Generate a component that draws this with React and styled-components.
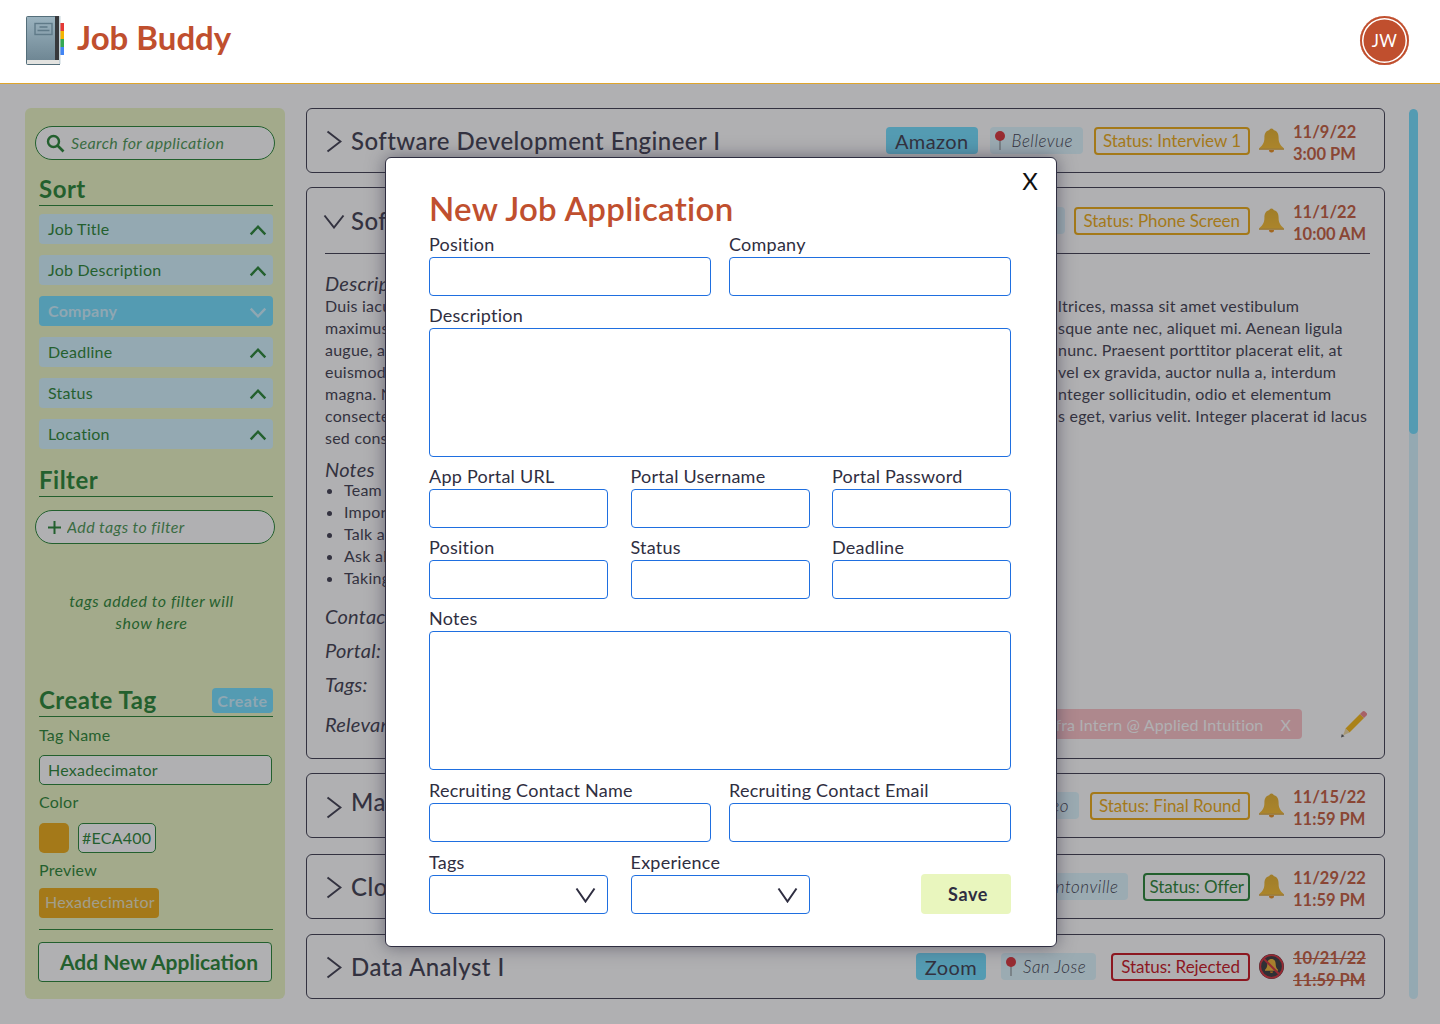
import React from "react";
import styled, { createGlobalStyle } from "styled-components";

const FONT = `"Lato", "Noto Sans", sans-serif`;
const INK = "#2f2e41";
const GREEN = "#157a24";
const RUST = "#c04f2e";
const AMBER = "#eca400";
const SKY = "#66dcff";
const PALE_SKY = "#d0f3ff";
const SKY_TEXT = "#c8f0ff";
const CREAM = "#e9f6be";

const statusColors = { amber: AMBER, green: "#157a24", red: "#c4000c" };

const sortOptions = [
  { label: "Job Title" },
  { label: "Job Description" },
  { label: "Company", active: true },
  { label: "Deadline" },
  { label: "Status" },
  { label: "Location" },
];

const descriptionLines = [
  ["Duis iaculis", "ltrices, massa sit amet vestibulum"],
  ["maximus ligula", "sque ante nec, aliquet mi. Aenean ligula"],
  ["augue, a tempor", "nunc. Praesent porttitor placerat elit, at"],
  ["euismod lorem", "vel ex gravida, auctor nulla a, interdum"],
  ["magna. Nulla", "nteger sollicitudin, odio et elementum"],
  ["consectetur", "s eget, varius velit. Integer placerat id lacus"],
  ["sed consequat", ""],
];

const noteItems = ["Team", "Important", "Talk about", "Ask about", "Taking"];

const GlobalStyles = createGlobalStyle`
  html, body {
    margin: 0;
    padding: 0;
    background: #fff;
    overflow: hidden;
  }
  * {
    box-sizing: border-box;
  }
  body {
    font-family: ${FONT};
    color: ${INK};
    letter-spacing: 0.015em;
  }
  input, button, textarea {
    letter-spacing: inherit;
  }
`;

const Page = styled.div`
  position: relative;
  width: 1440px;
  height: 1024px;
  overflow: hidden;
`;

const Header = styled.header`
  height: 84px;
  padding: 16px 31px 0 26px;
  display: flex;
  align-items: flex-start;
  background: #fff;
  border-bottom: 1px solid #dfa52c;
`;

const Brand = styled.h1`
  margin: 0 0 0 13px;
  font-size: 33px;
  line-height: 43px;
  font-weight: 700;
  letter-spacing: 0;
  color: ${RUST};
`;

const Avatar = styled.div`
  margin-left: auto;
  width: 49px;
  height: 49px;
  border-radius: 50%;
  display: flex;
  align-items: center;
  justify-content: center;
  background: ${RUST};
  box-shadow: inset 0 0 0 2px ${RUST}, inset 0 0 0 3.5px #fff;
  color: #fff;
  font-size: 17px;
`;

const Main = styled.main`
  height: 940px;
  padding: 24px 19px 25px 25px;
  display: grid;
  grid-template-columns: 260px 1079px 12px;
  column-gap: 21px;
`;

const Sidebar = styled.aside`
  padding: 18px 10px 0;
  border-radius: 6px;
  background: ${CREAM};
  color: ${GREEN};
`;

const PillField = styled.label`
  height: 34px;
  padding: 0 12px 0 ${(p) => p.$left || 10}px;
  display: flex;
  align-items: center;
  gap: ${(p) => p.$gap || 6}px;
  border: 1px solid ${GREEN};
  border-radius: 17px;
  background: #fff;
  margin-top: ${(p) => p.$top || 0}px;
`;

const PillInput = styled.input`
  flex: 1;
  min-width: 0;
  border: 0;
  padding: 0 0 2px;
  outline: 0;
  background: transparent;
  font: italic 16px ${FONT};
  letter-spacing: 0.4px;
  color: ${GREEN};
  &::placeholder {
    color: ${GREEN};
    opacity: 0.85;
  }
`;

const SideBlock = styled.div`
  margin: ${(p) => p.$top || 0}px 2px 0 4px;
`;

const SideHeading = styled.div`
  height: 32px;
  padding-bottom: 2px;
  display: flex;
  align-items: center;
  justify-content: space-between;
  border-bottom: 1px solid ${GREEN};
  font-size: 24px;
  line-height: 30px;
  font-weight: 700;
  letter-spacing: 0.5px;
`;

const SortList = styled.div`
  margin-top: 8px;
  display: flex;
  flex-direction: column;
  gap: 11px;
`;

const SortRow = styled.div`
  height: 30px;
  padding: 0 6px 2px 9px;
  display: flex;
  align-items: center;
  justify-content: space-between;
  border-radius: 4px;
  font-size: 16px;
  font-weight: ${(p) => (p.$active ? 700 : 400)};
  background: ${(p) => (p.$active ? SKY : PALE_SKY)};
  color: ${(p) => (p.$active ? SKY_TEXT : GREEN)};
  svg {
    margin-top: 4px;
  }
`;

const Hint = styled.p`
  margin: 46px 9px 0 0;
  text-align: center;
  font-size: 16px;
  line-height: 22px;
  font-style: italic;
  letter-spacing: 0.55px;
`;

const CreateButton = styled.button`
  width: 61px;
  height: 25px;
  margin-top: 2px;
  padding: 0;
  border: 0;
  border-radius: 4px;
  background: ${SKY};
  color: ${SKY_TEXT};
  font: 700 16px ${FONT};
`;

const SmallLabel = styled.div`
  margin-top: ${(p) => p.$top}px;
  font-size: 16px;
  line-height: 22px;
`;

const TagNameInput = styled.input`
  display: block;
  width: 233px;
  height: 30px;
  margin-top: 9px;
  padding: 0 8px 2px;
  border: 1px solid ${GREEN};
  border-radius: 5px;
  background: #fff;
  font: 16px ${FONT};
  color: ${GREEN};
`;

const ColorRow = styled.div`
  margin-top: 10px;
  display: flex;
  gap: 9px;
`;

const Swatch = styled.div`
  width: 30px;
  height: 30px;
  border-radius: 5px;
  background: ${AMBER};
`;

const HexInput = styled.input`
  width: 78px;
  height: 30px;
  padding: 0 3px 2px;
  border: 1px solid ${GREEN};
  border-radius: 5px;
  background: #fff;
  font: 16px ${FONT};
  color: ${GREEN};
`;

const PreviewTag = styled.div`
  margin-top: 7px;
  width: 120px;
  height: 30px;
  padding-left: 6px;
  border-radius: 4px;
  background: ${AMBER};
  color: #e7e2c0;
  font-size: 16px;
  line-height: 28px;
`;

const Rule = styled.hr`
  margin: 11px 0 0;
  border: 0;
  border-top: 1px solid ${GREEN};
`;

const AddButton = styled.button`
  display: block;
  width: 234px;
  height: 40px;
  margin: 12px 0 0 -1px;
  padding: 0 0 2px 8px;
  border: 1px solid ${GREEN};
  border-radius: 4px;
  background: #fff;
  color: ${GREEN};
  font: 700 21px ${FONT};
  letter-spacing: 0;
`;

const JobList = styled.section`
  display: flex;
  flex-direction: column;
  gap: 14px;
`;

const Card = styled.article`
  margin-bottom: ${(p) => p.$after || 0}px;
  padding: 0 14px 0 18px;
  border: 1px solid ${INK};
  border-radius: 6px;
  background: #fff;
`;

const CardBody = styled.div`
  padding-bottom: 19px;
`;

const CardRow = styled.div`
  height: ${(p) => (p.$open ? 66 : 63)}px;
  display: flex;
  align-items: center;
  ${(p) => p.$open && `border-bottom: 1px solid ${INK};`}
`;

const ChevronSlot = styled.span`
  width: 26px;
  flex: none;
  display: flex;
  margin-top: ${(p) => (p.$lift ? 4 : 1)}px;
  padding-left: ${(p) => (p.$open ? 0 : 1)}px;
  margin-left: ${(p) => (p.$open ? -2 : 0)}px;
  margin-right: ${(p) => (p.$open ? 2 : 0)}px;
`;

const JobTitle = styled.h2`
  margin: 0 auto ${(p) => p.$lift || 0}px 0;
  font-size: 24px;
  font-weight: 500;
  letter-spacing: 0.45px;
  white-space: nowrap;
`;

const CompanyTag = styled.span`
  height: 27px;
  margin-right: ${(p) => p.$gap || 12}px;
  padding: 0 9px;
  display: flex;
  align-items: center;
  border-radius: 4px;
  background: ${SKY};
  font-size: 20px;
  letter-spacing: 0.4px;
`;

const LocationTag = styled.span`
  height: 27px;
  margin-right: ${(p) => p.$gap || 11}px;
  padding: 0 10px 0 2px;
  display: flex;
  align-items: center;
  gap: 4px;
  border-radius: 4px;
  background: #dcf7ff;
  font-size: 17px;
  font-style: italic;
  font-weight: 300;
  letter-spacing: 0.5px;
  white-space: nowrap;
`;

const StatusTag = styled.span`
  height: 28px;
  padding: 0 ${(p) => p.$pad}px;
  display: flex;
  align-items: center;
  border: 2px solid ${(p) => statusColors[p.$tone]};
  border-radius: 4px;
  color: ${(p) => statusColors[p.$tone]};
  font-size: 17px;
  letter-spacing: -0.05px;
  white-space: nowrap;
`;

const Deadline = styled.div`
  width: 77px;
  margin: 4px 0 0 9px;
  color: ${RUST};
  font-size: 16.5px;
  font-weight: 700;
  letter-spacing: 0;
  line-height: 22px;
  text-decoration: ${(p) => (p.$past ? "line-through" : "none")};
  white-space: nowrap;
`;

const BellSlot = styled.span`
  width: 25px;
  height: 25px;
  margin-left: 9px;
  flex: none;
  display: block;
`;

const CardSection = styled.div`
  margin-top: ${(p) => p.$top}px;
  font-size: 20px;
  line-height: 24px;
  font-style: italic;
  white-space: nowrap;
`;

const ParaLine = styled.div`
  display: grid;
  grid-template-columns: 733px 1fr;
  font-size: 16px;
  line-height: 22px;
  white-space: nowrap;
`;

const NoteList = styled.ul`
  margin: -2px 0 0;
  padding: 0 0 0 19px;
  font-size: 16px;
  line-height: 22px;
`;

const RelevantRow = styled.div`
  margin-top: 13px;
  height: 30px;
  display: flex;
  align-items: center;
  font-size: 20px;
  font-style: italic;
`;

const ContactTag = styled.span`
  margin-left: auto;
  width: 560px;
  height: 30px;
  padding: 0 11px 0 0;
  display: flex;
  align-items: center;
  justify-content: flex-end;
  gap: 17px;
  border-radius: 4px;
  background: #fcbcc2;
  color: #fff;
  font-size: 16px;
  font-style: normal;
  letter-spacing: 0.15px;
`;

const PencilSlot = styled.span`
  margin: 0 3px 0 37px;
  display: block;
  width: 28px;
  height: 28px;
`;

const ScrollTrack = styled.div`
  height: 890px;
  margin: 1px 0 0 3px;
  border-radius: 6px;
  background: ${PALE_SKY};
  overflow: hidden;
`;

const ScrollThumb = styled.div`
  height: 325px;
  border-radius: 6px;
  background: ${SKY};
`;

const Overlay = styled.div`
  position: absolute;
  top: 84px;
  left: 0;
  right: 0;
  bottom: 0;
  padding: 73px 0 0 2px;
  display: flex;
  justify-content: center;
  align-items: flex-start;
  background: rgba(58, 58, 62, 0.4);
`;

const Modal = styled.form`
  position: relative;
  width: 672px;
  height: 790px;
  padding: 30px 45px 0 43px;
  border: 1px solid ${INK};
  border-radius: 6px;
  background: #fff;
  box-shadow: 0 0 18px rgba(47, 46, 65, 0.55);
`;

const CloseButton = styled.button`
  position: absolute;
  top: 8px;
  right: 18px;
  padding: 0;
  border: 0;
  background: transparent;
  color: #111;
  font: 24px ${FONT};
`;

const ModalTitle = styled.h2`
  margin: 0;
  height: 45px;
  color: ${RUST};
  font-size: 33px;
  line-height: 40px;
  font-weight: 600;
  letter-spacing: 0.3px;
`;

const FormRows = styled.div`
  display: flex;
  flex-direction: column;
  gap: 8px;
`;

const FormRow = styled.div`
  display: grid;
  grid-template-columns: ${(p) =>
    p.$cols === 3 ? "179px 179px 179px" : p.$cols === 2 ? "282px 282px" : "1fr"};
  justify-content: space-between;
  margin-top: ${(p) => p.$top || 0}px;
`;

const FieldLabel = styled.label`
  display: block;
  font-size: 18px;
  line-height: 22px;
`;

const FieldInput = styled.input`
  display: block;
  width: 100%;
  height: 39px;
  margin-top: 2px;
  border: 1px solid #1f6fe0;
  border-radius: 4px;
  background: #fff;
`;

const FieldArea = styled.textarea`
  display: block;
  width: 100%;
  height: ${(p) => p.$h}px;
  margin-top: 2px;
  border: 1px solid #1f6fe0;
  border-radius: 4px;
  background: #fff;
  resize: none;
`;

const SelectBox = styled.div`
  height: 39px;
  margin-top: 2px;
  padding-right: 11px;
  display: flex;
  align-items: center;
  justify-content: flex-end;
  border: 1px solid #1f6fe0;
  border-radius: 4px;
`;

const SaveButton = styled.button`
  align-self: end;
  justify-self: end;
  width: 90px;
  height: 40px;
  padding-left: 10px;
  border: 0;
  border-radius: 4px;
  background: ${CREAM};
  color: ${INK};
  font: 700 18px ${FONT};
  letter-spacing: 0.6px;
`;

const Caret = ({ w, h, dir, color = INK, stroke = 2 }) => {
  const pad = stroke / 2 + 0.5;
  const points = {
    right: `${pad},${pad} ${w - pad},${h / 2} ${pad},${h - pad}`,
    down: `${pad},${pad} ${w / 2},${h - pad} ${w - pad},${pad}`,
    up: `${pad},${h - pad} ${w / 2},${pad} ${w - pad},${h - pad}`,
  }[dir];
  return (
    <svg width={w} height={h} viewBox={`0 0 ${w} ${h}`} style={{ flex: "none", display: "block" }}>
      <polyline points={points} fill="none" stroke={color} strokeWidth={stroke} />
    </svg>
  );
};

const BookLogo = () => (
  <svg width="38" height="50" viewBox="0 0 38 50">
    <defs>
      <linearGradient id="cover" x1="0" y1="0" x2="0" y2="1">
        <stop offset="0" stopColor="#9bb3bf" />
        <stop offset="1" stopColor="#6f8794" />
      </linearGradient>
    </defs>
    <rect x="34" y="7" width="4" height="8" fill="#e53935" />
    <rect x="34" y="15" width="4" height="8" fill="#f4b400" />
    <rect x="34" y="23" width="4" height="8" fill="#34a853" />
    <rect x="34" y="31" width="4" height="8" fill="#4285f4" />
    <path d="M2 0h32v49H2a2 2 0 0 1-2-2V2a2 2 0 0 1 2-2z" fill="#546e7a" />
    <rect x="1" y="1" width="32" height="43" fill="url(#cover)" />
    <rect x="29" y="0" width="4" height="44" fill="#37393c" />
    <rect x="33" y="0" width="1.5" height="48" fill="#c5d3da" />
    <rect x="1" y="44" width="32" height="4" fill="#e3e3e0" />
    <rect x="9" y="7.5" width="17" height="11" fill="none" stroke="#5f7a88" strokeWidth="1.4" />
    <path d="M13.5 11h8M11.5 14.5h12" stroke="#5f7a88" strokeWidth="1.3" />
  </svg>
);

const BellIcon = () => (
  <svg width="25" height="25" viewBox="0 0 25 25">
    <defs>
      <linearGradient id="bell" x1="0" y1="0" x2="0" y2="1">
        <stop offset="0" stopColor="#e3aa1c" />
        <stop offset="1" stopColor="#f8b81f" />
      </linearGradient>
    </defs>
    <path d="M12.5 0.5c1.3 0 2 .8 2.1 1.6 3.7 .9 5 3.9 5 7.7 0 4.700 1.4 7.300 5.200 10.500v1H.2v-1c3.800-3.200 5.200-5.800 5.200-10.500 0-3.800 1.300-6.800 5-7.700 .1-.8 .8-1.600 2.100-1.600z" fill="url(#bell)" />
    <rect x="0" y="20.400" width="25" height="1.400" fill="#d9a53a" />
    <path d="M10 22h5a2.500 2.500 0 0 1-5 0z" fill="#e8860c" />
  </svg>
);

const MutedBellIcon = () => (
  <svg width="25" height="25" viewBox="0 0 25 25">
    <circle cx="12.5" cy="12.5" r="12.500" fill="#2b2b30" />
    <circle cx="12.5" cy="12.5" r="11.300" fill="none" stroke="#d2202c" strokeWidth="1.800" />
    <path d="M12.500 5c3 0 4.200 2.400 4.200 5.200 0 2.700 .8 4 2.300 5.500v1.100H6v-1.100c1.500-1.500 2.300-2.800 2.300-5.500C8.300 7.400 9.500 5 12.500 5z" fill="#f0ad22" />
    <path d="M11 17.500h3a1.500 1.500 0 0 1-3 0z" fill="#e8860c" />
    <path d="M5 5l15 15" stroke="#d2202c" strokeWidth="2" />
  </svg>
);

const PinIcon = () => (
  <svg width="16" height="22" viewBox="0 0 16 22" style={{ flex: "none" }}>
    <rect x="7.200" y="8" width="1.600" height="12" fill="#9aa4a8" />
    <circle cx="8" cy="6" r="5" fill="#d8232a" />
  </svg>
);

const PencilIcon = () => (
  <svg width="28" height="28" viewBox="0 0 28 28">
    <path d="M6.500 18.500 21 4l4 4L10.500 22.500z" fill="#f5b301" />
    <path d="M21 4l2.500-2.500a1.800 1.800 0 0 1 2.500 0l1.500 1.500a1.800 1.800 0 0 1 0 2.500L25 8z" fill="#f07c80" />
    <path d="M6.500 18.500l4 4-6.500 3z" fill="#f1d79c" />
    <path d="M2 27.500l.8-3.500 2.700 2.200z" fill="#4a4a4a" />
  </svg>
);

const SearchIcon = () => (
  <svg width="19" height="19" viewBox="0 0 19 19" style={{ flex: "none" }}>
    <circle cx="7.500" cy="7.500" r="5.500" fill="none" stroke={GREEN} strokeWidth="2.400" />
    <path d="M11.500 11.500 17.500 17.500" stroke={GREEN} strokeWidth="2.600" />
  </svg>
);

const PlusIcon = () => (
  <svg width="13" height="13" viewBox="0 0 13 13" style={{ flex: "none" }}>
    <path d="M6.500 0v13M0 6.500h13" stroke={GREEN} strokeWidth="2" />
  </svg>
);

const JobCard = ({ title, company, companyGap, location, locationGap, status, tone, pad, date, time, muted, lift, after, children }) => (
  <Card $after={after}>
    <CardRow $open={!!children}>
      <ChevronSlot $open={!!children} $lift={lift}>
        {children ? <Caret dir="down" w={22} h={15} /> : <Caret dir="right" w={16} h={23} />}
      </ChevronSlot>
      <JobTitle $lift={lift}>{title}</JobTitle>
      <CompanyTag $gap={companyGap}>{company}</CompanyTag>
      <LocationTag $gap={locationGap}>
        <PinIcon />
        {location}
      </LocationTag>
      <StatusTag $tone={tone} $pad={pad}>Status: {status}</StatusTag>
      <BellSlot>{muted ? <MutedBellIcon /> : <BellIcon />}</BellSlot>
      <Deadline $past={muted}>
        {date}
        <br />
        {time}
      </Deadline>
    </CardRow>
    {children && <CardBody>{children}</CardBody>}
  </Card>
);

const Field = ({ label }) => (
  <div>
    <FieldLabel>{label}</FieldLabel>
    <FieldInput />
  </div>
);

const SelectField = ({ label }) => (
  <div>
    <FieldLabel>{label}</FieldLabel>
    <SelectBox>
      <Caret dir="down" w={21} h={16} />
    </SelectBox>
  </div>
);

export default function App() {
  return (
    <Page>
      <GlobalStyles />
      <Header>
        <BookLogo />
        <Brand>Job Buddy</Brand>
        <Avatar>JW</Avatar>
      </Header>
      <Main>
        <Sidebar>
          <PillField>
            <SearchIcon />
            <PillInput placeholder="Search for application" />
          </PillField>
          <SideBlock $top={14}>
            <SideHeading>Sort</SideHeading>
            <SortList>
              {sortOptions.map((o) => (
                <SortRow key={o.label} $active={o.active}>
                  {o.label}
                  <Caret
                    dir={o.active ? "down" : "up"}
                    w={18}
                    h={11}
                    stroke={2.4}
                    color={o.active ? SKY_TEXT : GREEN}
                  />
                </SortRow>
              ))}
            </SortList>
          </SideBlock>
          <SideBlock $top={16}>
            <SideHeading>Filter</SideHeading>
          </SideBlock>
          <PillField $top={13} $left={12}>
            <PlusIcon />
            <PillInput placeholder="Add tags to filter" />
          </PillField>
          <SideBlock>
            <Hint>
              tags added to filter will
              <br />
              show here
            </Hint>
          </SideBlock>
          <SideBlock $top={51}>
            <SideHeading>
              Create Tag
              <CreateButton type="button">Create</CreateButton>
            </SideHeading>
            <SmallLabel $top={7}>Tag Name</SmallLabel>
            <TagNameInput defaultValue="Hexadecimator" />
            <SmallLabel $top={6}>Color</SmallLabel>
            <ColorRow>
              <Swatch />
              <HexInput defaultValue="#ECA400" />
            </ColorRow>
            <SmallLabel $top={6}>Preview</SmallLabel>
            <PreviewTag>Hexadecimator</PreviewTag>
            <Rule />
            <AddButton type="button">Add New Application</AddButton>
          </SideBlock>
        </Sidebar>

        <JobList>
          <JobCard title="Software Development Engineer I" company="Amazon" location="Bellevue" status="Interview 1" tone="amber" pad={7} date="11/9/22" time="3:00 PM" />
          <JobCard title="Software Engineer Intern" company="Microsoft" location="Seattle" locationGap={9} status="Phone Screen" tone="amber" pad={8} date="11/1/22" time="10:00 AM">
            <CardSection $top={17}>Description:</CardSection>
            {descriptionLines.map(([left, right]) => (
              <ParaLine key={left}>
                <span>{left}</span>
                <span>{right}</span>
              </ParaLine>
            ))}
            <CardSection $top={8}>Notes</CardSection>
            <NoteList>
              {noteItems.map((n) => (
                <li key={n}>{n}</li>
              ))}
            </NoteList>
            <CardSection $top={15}>Contact:</CardSection>
            <CardSection $top={10}>Portal:</CardSection>
            <CardSection $top={10}>Tags:</CardSection>
            <RelevantRow>
              Relevant Contacts:
              <ContactTag>
                Infra Intern @ Applied Intuition
                <span>X</span>
              </ContactTag>
              <PencilSlot>
                <PencilIcon />
              </PencilSlot>
            </RelevantRow>
          </JobCard>
          <JobCard title="Machine Learning Engineer" company="Roblox" location="San Mateo" status="Final Round" tone="amber" pad={7} date="11/15/22" time="11:59 PM" lift={8} after={2} />
          <JobCard title="Cloud Engineer" company="Walmart" location="Bentonville" locationGap={15} status="Offer" tone="green" pad={4} date="11/29/22" time="11:59 PM" after={1} />
          <JobCard title="Data Analyst I" company="Zoom" companyGap={15} location="San Jose" locationGap={15} status="Rejected" tone="red" pad={8} date="10/21/22" time="11:59 PM" muted />
        </JobList>

        <ScrollTrack>
          <ScrollThumb />
        </ScrollTrack>
      </Main>

      <Overlay>
        <Modal>
          <CloseButton type="button">X</CloseButton>
          <ModalTitle>New Job Application</ModalTitle>
          <FormRows>
            <FormRow $cols={2}>
              <Field label="Position" />
              <Field label="Company" />
            </FormRow>
            <FormRow>
              <div>
                <FieldLabel>Description</FieldLabel>
                <FieldArea $h={129} />
              </div>
            </FormRow>
            <FormRow $cols={3}>
              <Field label="App Portal URL" />
              <Field label="Portal Username" />
              <Field label="Portal Password" />
            </FormRow>
            <FormRow $cols={3}>
              <Field label="Position" />
              <Field label="Status" />
              <Field label="Deadline" />
            </FormRow>
            <FormRow>
              <div>
                <FieldLabel>Notes</FieldLabel>
                <FieldArea $h={139} />
              </div>
            </FormRow>
            <FormRow $cols={2} $top={1}>
              <Field label="Recruiting Contact Name" />
              <Field label="Recruiting Contact Email" />
            </FormRow>
            <FormRow $cols={3} $top={1}>
              <SelectField label="Tags" />
              <SelectField label="Experience" />
              <SaveButton type="button">Save</SaveButton>
            </FormRow>
          </FormRows>
        </Modal>
      </Overlay>
    </Page>
  );
}
